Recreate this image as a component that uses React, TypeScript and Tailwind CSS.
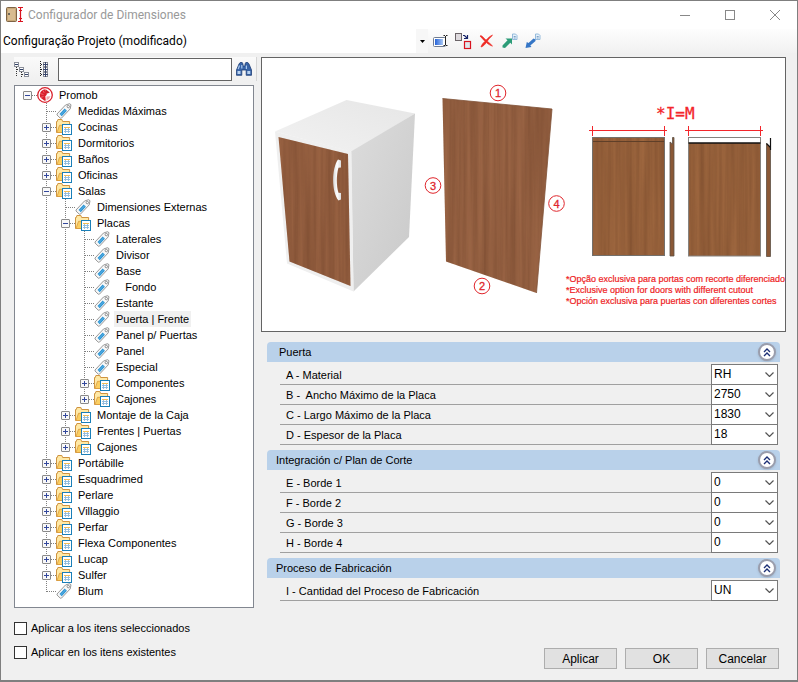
import { useState } from 'react'
import type { ReactNode } from 'react'

type TreeItem = {
  label: string
  kind?: 'root' | 'folder' | 'tag'
  open?: boolean
  children?: TreeItem[]
}

type Field = { id: string; label: string; value: string }

const folder = (label: string, children: TreeItem[] = [], open = false): TreeItem => ({
  label, kind: 'folder', open, children,
})
const tag = (label: string): TreeItem => ({ label, kind: 'tag' })

const TREE: TreeItem = {
  label: 'Promob',
  kind: 'root',
  open: true,
  children: [
    tag('Medidas Máximas'),
    folder('Cocinas'),
    folder('Dormitorios'),
    folder('Baños'),
    folder('Oficinas'),
    folder('Salas', [
      tag('Dimensiones Externas'),
      folder('Placas', [
        tag('Laterales'),
        tag('Divisor'),
        tag('Base'),
        tag('   Fondo'),
        tag('Estante'),
        tag('Puerta | Frente'),
        tag('Panel p/ Puertas'),
        tag('Panel'),
        tag('Especial'),
        folder('Componentes'),
        folder('Cajones'),
      ], true),
      folder('Montaje de la Caja'),
      folder('Frentes | Puertas'),
      folder('Cajones'),
    ], true),
    folder('Portábille'),
    folder('Esquadrimed'),
    folder('Perlare'),
    folder('Villaggio'),
    folder('Perfar'),
    folder('Flexa Componentes'),
    folder('Lucap'),
    folder('Sulfer'),
    tag('Blum'),
  ],
}

const SECTIONS: { title: string; inset?: boolean; fields: Field[] }[] = [
  {
    title: 'Puerta',
    inset: true,
    fields: [
      { id: 'a', label: 'A - Material', value: 'RH' },
      { id: 'b', label: 'B -  Ancho Máximo de la Placa', value: '2750' },
      { id: 'c', label: 'C - Largo Máximo de la Placa', value: '1830' },
      { id: 'd', label: 'D - Espesor de la Placa', value: '18' },
    ],
  },
  {
    title: 'Integración c/ Plan de Corte',
    fields: [
      { id: 'e', label: 'E - Borde 1', value: '0' },
      { id: 'f', label: 'F - Borde 2', value: '0' },
      { id: 'g', label: 'G - Borde 3', value: '0' },
      { id: 'h', label: 'H - Borde 4', value: '0' },
    ],
  },
  {
    title: 'Proceso de Fabricación',
    fields: [{ id: 'i', label: 'I - Cantidad del Proceso de Fabricación', value: 'UN' }],
  },
]

/* ---------- icons ---------- */

function AppIcon() {
  return (
    <svg width="18" height="18" viewBox="0 0 18 18" aria-hidden="true">
      <rect x="0.5" y="1.5" width="10" height="14" rx="1" fill="#c9a878" stroke="#7d6344" />
      <rect x="2" y="3" width="7" height="11" fill="#d8bc90" />
      <rect x="2" y="7" width="2" height="2" fill="#6e6657" />
      <path d="M12 1.5h5M12 15.5h5M14.5 2v13M13 4.5h3M13 12.5h3" stroke="#d8131f" strokeWidth="1.2" />
    </svg>
  )
}

function RootIcon() {
  return (
    <svg width="16" height="16" viewBox="0 0 16 16" aria-hidden="true">
      <circle cx="8" cy="8" r="7.3" fill="#fff" stroke="#d9202c" strokeWidth="1.3" />
      <path d="M8.500 2.200a5.800 5.800 0 0 0-5 8.500l4 3 1.300-.3-.5-4.200 1.500-1.400-.6-2.300z" fill="#dc1f2b" />
      <path d="M9 2.400l3.800 3-1.800.8-2 .6z" fill="#c9222c" />
      <path d="M9.500 9.500l4-.3-1.500 2.600-2.500 1.600z" fill="#f0a5a9" />
      <path d="M3 6.500l3.500 1M6 3.500l1.200 2.400M3.500 10.500l3-1" stroke="#fff" strokeOpacity="0.5" strokeWidth="0.6" />
    </svg>
  )
}

function FolderIcon() {
  return (
    <svg width="16" height="16" viewBox="0 0 16 16" aria-hidden="true">
      <path d="M.5 13.5v-11h.8l.6-2h4l.7 2h7v11z" fill="#ffe9a6" stroke="#cf9440" />
      <path d="M1 13.500l2.500-7.200h10v7.200z" fill="#fbcf62" stroke="#d99a3e" strokeWidth="0.8" />
      <rect x="6.500" y="5.500" width="9" height="10" fill="#fff" stroke="#1a7fb8" />
      <path d="M8 8.500h6" stroke="#f3bd54" />
      <path d="M8 10.500h6M8 12.500h6M9.500 9v5M12.500 9v5" stroke="#8cb9dc" strokeWidth="0.9" />
    </svg>
  )
}

function TagIcon() {
  return (
    <svg width="16" height="16" viewBox="0 0 16 16" aria-hidden="true">
      <path d="M1 11L9.500 2l4-1.300 1.500 1-.8 4.200-8.700 9.200-1.200.1L1 12z" fill="#f8f8f8" stroke="#8c8c8c" strokeWidth="0.9" />
      <path d="M3.500 11L8.700 5.500l2.200 2.300L5.700 13.300z" fill="#2a94d4" />
      <path d="M4.600 12l5.200-5.400" stroke="#8fcbee" strokeWidth="0.6" />
      <circle cx="12.300" cy="3.600" r="1.200" fill="#fff" stroke="#777" strokeWidth="0.8" />
    </svg>
  )
}

const ICONS: Record<string, () => ReactNode> = { root: RootIcon, folder: FolderIcon, tag: TagIcon }

function CollapseAllIcon() {
  return (
    <svg width="16" height="16" viewBox="0 0 16 16" aria-hidden="true">
      <path d="M2.5 6v10M7.5 11v5M3 8.5h3M8 13.5h3" stroke="#333" strokeDasharray="1 1" />
      <g fill="#fff" stroke="#8b8f99">
        <rect x="0.5" y="1.5" width="4" height="4" />
        <rect x="5.5" y="6.5" width="4" height="4" />
        <rect x="10.5" y="11.5" width="4" height="4" />
      </g>
      <path d="M1 3.5h3M6 8.5h3M11 13.5h3" stroke="#2f3f66" />
    </svg>
  )
}

function ExpandAllIcon() {
  return (
    <svg width="12" height="16" viewBox="0 0 12 16" aria-hidden="true">
      <path d="M1.5 0v16M2 3.5h2M2 8.5h2M2 13.5h2" stroke="#222" strokeDasharray="1 1" />
      <g fill="#fff" stroke="#8b8f99">
        <rect x="4.5" y="1.5" width="4" height="4" />
        <rect x="4.5" y="6.5" width="4" height="4" />
        <rect x="4.5" y="11.5" width="4" height="4" />
      </g>
      <path d="M4 3.5h5M4 8.5h5M4 13.5h5M6.5 1v15" stroke="#39466b" />
    </svg>
  )
}

function BinocularsIcon() {
  return (
    <svg width="16" height="14" viewBox="0 0 16 14" aria-hidden="true">
      <path d="M3 2l1.2-1.5h2L7 2v2h2V2l.8-1.5h2L13 2l2.5 6v5.3h-5.3V8H5.8v5.3H.5V8z" fill="#3763a6" stroke="#1f3f77" strokeWidth="0.8" />
      <path d="M1.5 9h3v3h-3zM11.3 9h3v3h-3z" fill="#b9d2f0" />
      <path d="M3.5 3.5l-1.3 3.6M10.4 3.5v3.6M5.8 3v3.5" stroke="#a9c8ee" strokeWidth="1.2" />
    </svg>
  )
}

function RenameIcon() {
  return (
    <svg width="16" height="14" viewBox="0 0 16 14" aria-hidden="true">
      <defs>
        <linearGradient id="rename" x1="0" x2="1">
          <stop offset="0" stopColor="#2563d8" />
          <stop offset="1" stopColor="#a9c8f5" />
        </linearGradient>
      </defs>
      <rect x="0.5" y="3.5" width="12" height="9" rx="1" fill="#fff" stroke="#6f7c92" />
      <rect x="2" y="5" width="8" height="6" fill="url(#rename)" />
      <path d="M10.5 1.500h1.500M13 1.500h1.500M10.500 11.500h1.500M13 11.500h1.500M12.500 2v9" stroke="#222" />
    </svg>
  )
}

function DuplicateIcon() {
  return (
    <svg width="17" height="17" viewBox="0 0 17 17" aria-hidden="true">
      <rect x="0.5" y="0.5" width="6" height="7" fill="#dedade" stroke="#6b6468" />
      <path d="M8 2.500h1.500l2.500 2.500M12.500 2v3.500H9" stroke="#17256b" strokeWidth="1.2" fill="none" />
      <rect x="9.5" y="8.5" width="6" height="7" fill="#dfe6ea" stroke="#d8131f" strokeWidth="1.2" />
    </svg>
  )
}

function DeleteIcon() {
  return (
    <svg width="15" height="14" viewBox="0 0 15 14" aria-hidden="true">
      <path d="M1 2c1-.8 2-.3 6 4.200C9 4 11 2 13.500 1.200 11 3.500 9.500 5.300 8.300 7.200c1.700 1.500 3.500 3 5.200 4.800-1.800-.2-4-1.700-6.200-3.500C5.500 11 4 12.500 2 13c.5-2 2-3.800 4-5.700C4 5.500 2.500 3.500 1 2z" fill="#ee2a24" stroke="#ee2a24" strokeWidth="0.700" strokeLinejoin="round" />
    </svg>
  )
}

function PageArrowIcon({ color, out = false }: { color: string; out?: boolean }) {
  return (
    <svg width="16" height="16" viewBox="0 0 16 16" aria-hidden="true">
      <path d="M10.500 1h3l1.500 1.500V6.500h-4.500z" fill="#e8f2fb" stroke="#8bb4d8" strokeWidth="0.9" />
      <path d="M11.700 3.500h2M11.700 5h2" stroke="#4d7fb0" strokeWidth="0.7" />
      {out
        ? <path d="M10.500 6.500L8.500 5.500l-5 4.500-1.700-1L.500 15l6-1-1.200-1.600 5.200-4.500z" fill={color} />
        : <path d="M3.500 5.500h6.500v6L8.300 9.800 3 15 .500 14.500V12.500L5.500 7.200z" fill={color} />}
    </svg>
  )
}

/* ---------- tree ---------- */

function Guide({ kind }: { kind: 'none' | 'line' | 'tee' | 'end' | 'top' }) {
  return (
    <svg width="19" height="16" viewBox="0 0 19 16" className="block shrink-0" aria-hidden="true">
      <g stroke="#808080" strokeDasharray="1 1" fill="none">
        {(kind === 'line' || kind === 'tee') && <path d="M9.500 0v16" />}
        {kind === 'end' && <path d="M9.500 0v9" />}
        {kind !== 'none' && kind !== 'line' && <path d="M10 8.500h9" />}
      </g>
    </svg>
  )
}

function Expander({ open, onClick, label }: { open: boolean; onClick: () => void; label: string }) {
  return (
    <button
      type="button"
      aria-label={`${open ? 'Contraer' : 'Expandir'} ${label}`}
      onClick={onClick}
      className="absolute top-1 left-[5px] block"
    >
      <svg width="9" height="9" viewBox="0 0 9 9" className="block">
        <rect x="0.5" y="0.5" width="8" height="8" rx="0.5" fill="#f8f8f8" stroke="#8a8a8a" />
        <path d="M2 4.500h5" stroke="#33489c" />
        {!open && <path d="M4.500 2v5" stroke="#33489c" />}
      </svg>
    </button>
  )
}

type NodeProps = {
  item: TreeItem
  guides: boolean[]
  last: boolean
  selected: string
  onSelect: (label: string) => void
}

function TreeNode({ item, guides, last, selected, onSelect }: NodeProps) {
  const [open, setOpen] = useState(!!item.open)
  const Icon = ICONS[item.kind ?? 'tag']
  const isRoot = item.kind === 'root'
  const nextGuides = [...guides, !last]

  return (
    <li>
      <div className="flex h-4 items-center">
        {guides.map((g, i) => <Guide key={i} kind={g ? 'line' : 'none'} />)}
        <span className="relative shrink-0">
          <Guide kind={isRoot ? 'top' : last ? 'end' : 'tee'} />
          {item.children && <Expander open={open} onClick={() => setOpen(!open)} label={item.label} />}
        </span>
        <Icon />
        <button
          type="button"
          onClick={() => onSelect(item.label)}
          className={`ml-1 h-4 px-0.5 leading-4 whitespace-pre ${selected === item.label ? 'bg-[#f0f0f0]' : ''}`}
        >
          {item.label}
        </button>
      </div>
      {open && item.children && item.children.length > 0 && (
        <ul>
          {item.children.map((child, i) => (
            <TreeNode
              key={child.label}
              item={child}
              guides={nextGuides}
              last={i === item.children!.length - 1}
              selected={selected}
              onSelect={onSelect}
            />
          ))}
        </ul>
      )}
    </li>
  )
}

/* ---------- door drawing ---------- */

function Callout({ x, y, n }: { x: number; y: number; n: number }) {
  return (
    <g>
      <circle cx={x} cy={y} r="7.800" fill="#fff" stroke="#e0262c" strokeWidth="1" />
      <text x={x} y={y + 4} textAnchor="middle" fontSize="11" fill="#e0262c" stroke="#e0262c" strokeWidth="0.300">{n}</text>
    </g>
  )
}

function Measure({ x1, x2 }: { x1: number; x2: number }) {
  return (
    <path
      d={`M${x1 - 3} 130.500H${x2 + 3}M${x1 + 0.5} 126v10M${x2 + 0.5} 126v10`}
      stroke="#f3262b"
      strokeWidth="1"
    />
  )
}

function DoorDrawing() {
  return (
    <svg viewBox="262 58 523 273" className="block w-full" role="img" aria-label="Puerta | Frente">
      <defs>
        <linearGradient id="top" x1="0" y1="1" x2="1" y2="0">
          <stop offset="0" stopColor="#f2f2f2" />
          <stop offset="1" stopColor="#e6e6e6" />
        </linearGradient>
        <linearGradient id="side" x1="0" y1="0" x2="1" y2="1">
          <stop offset="0" stopColor="#dcdcdc" />
          <stop offset="1" stopColor="#c9c9c9" />
        </linearGradient>
        <linearGradient id="handle" x1="0" x2="1">
          <stop offset="0" stopColor="#d5d5d5" />
          <stop offset="0.5" stopColor="#ffffff" />
          <stop offset="1" stopColor="#dddddd" />
        </linearGradient>
        <filter id="grain" x="0" y="0" width="1" height="1" colorInterpolationFilters="sRGB">
          <feTurbulence type="fractalNoise" baseFrequency="0.18 0.005" numOctaves="3" seed="4" />
          <feColorMatrix values="0 0 0 0 0.32  0 0 0 0 0.17  0 0 0 0 0.09  0.500 0 0 0 -0.100" />
          <feComposite in2="SourceGraphic" operator="in" result="veins" />
          <feMerge>
            <feMergeNode in="SourceGraphic" />
            <feMergeNode in="veins" />
          </feMerge>
        </filter>
      </defs>

      {/* cabinet */}
      <path d="M275 131.500L346.500 100 415 113.500 352 152z" fill="url(#top)" />
      <path d="M351 151.500L415 113.500 409 237 353.500 291.500z" fill="url(#side)" />
      <path d="M275 131.500L351.500 151.500 353.500 291.500 287 263.500z" fill="#efefef" />
      <path d="M278.500 137L348 154 350.500 286 289.500 261.500z" fill="#9a6343" filter="url(#grain)" />
      <path d="M338 159.500l3 1v7l-2.500.3c-2.200 7-2.200 18 0 25l2.500.3v6.500l-2.500 1c-7-9-7-32-.5-41.100z" fill="url(#handle)" />

      {/* door panel */}
      <path d="M442.500 98.500L552 109 536.500 293 446 261.500z" fill="#9c6646" filter="url(#grain)" />
      <path d="M442.500 98.500L552 109 536.500 293" fill="none" stroke="#81543a" strokeWidth="0.800" />

      <g fontFamily="'Liberation Sans', Arial, sans-serif">
        <Callout x={498} y={93} n={1} />
        <Callout x={482} y={286} n={2} />
        <Callout x={433} y={185.500} n={3} />
        <Callout x={556.500} y={203.500} n={4} />
      </g>

      {/* cutout variants */}
      <text x="656" y="119" fontSize="16" fill="#f3262b" stroke="#f3262b" strokeWidth="0.300" fontFamily="'DejaVu Sans Mono', monospace">*I=M</text>
      <Measure x1={592} x2={664} />
      <Measure x1={688} x2={760} />

      <rect x="592.500" y="137.500" width="72" height="118" fill="#9e673f" filter="url(#grain)" />
      <rect x="592.500" y="137.500" width="72" height="118" fill="none" stroke="#73706c" />
      <path d="M593 141.500h71" stroke="#5f3f28" />
      <path d="M670 142l2.500 2v-6.500h1.500v118.500h-4z" fill="#8a5836" stroke="#5e5045" strokeWidth="0.800" />

      <rect x="688.500" y="143" width="72" height="113" fill="#9e673f" filter="url(#grain)" />
      <rect x="688.500" y="137.500" width="72" height="118.500" fill="none" stroke="#85827e" />
      <rect x="689" y="138" width="71" height="4.500" fill="#fff" />
      <path d="M688.500 143h72" stroke="#111" strokeWidth="1.600" />
      <path d="M766.500 143.500l4 4v109h-4z" fill="#8a5836" stroke="#5e5045" strokeWidth="0.800" />
      <path d="M770.500 138v12M766.500 143.500l4 4" stroke="#111" strokeWidth="1.200" />

      <g fontSize="9" fill="#ee1c24" stroke="#ee1c24" strokeWidth="0.200" fontFamily="'Liberation Sans', Arial, sans-serif">
        <text x="566" y="282">*Opção exclusiva para portas com recorte diferenciado</text>
        <text x="566" y="293">*Exclusive option for doors with different cutout</text>
        <text x="566" y="304">*Opción exclusiva para puertas con diferentes cortes</text>
      </g>
    </svg>
  )
}

/* ---------- form ---------- */

function FieldRow({ field }: { field: Field }) {
  return (
    <div className="flex h-5 items-end">
      <label
        htmlFor={field.id}
        className="h-5 flex-1 border-b border-[#a0a0a0] pl-[6px] leading-5 whitespace-pre"
      >
        {field.label}
      </label>
      <span className="relative h-[21px] w-[67px]">
        <select
          id={field.id}
          defaultValue={field.value}
          className="block h-[21px] w-full appearance-none border border-[#7a7a7a] bg-white pb-0.5 pl-[2px] text-xs outline-none"
        >
          <option>{field.value}</option>
        </select>
        <svg width="9" height="5" viewBox="0 0 9 5" className="pointer-events-none absolute top-2 right-1" aria-hidden="true">
          <path d="M0.500 0.500l4 4 4-4" fill="none" stroke="#555" strokeWidth="1.200" />
        </svg>
      </span>
    </div>
  )
}

function Section({ title, inset, fields }: { title: string; inset?: boolean; fields: Field[] }) {
  const [open, setOpen] = useState(true)
  return (
    <section className="mb-[5px]">
      <div className="flex h-5 items-center justify-between rounded-t bg-[#b9d1ea] pr-1">
        <h2 className={inset ? 'pl-3' : 'pl-[9px]'}>{title}</h2>
        <button
          type="button"
          aria-label={`Mostrar u ocultar ${title}`}
          onClick={() => setOpen(!open)}
          className="flex size-[18px] items-center justify-center rounded-full border-2 border-[#9a9dac] bg-white shadow-sm"
        >
          <svg width="8" height="9" viewBox="0 0 8 9" aria-hidden="true">
            <path d="M1 4l3-3 3 3M1 8l3-3 3 3" fill="none" stroke="#1c2f75" strokeWidth="1.400" />
          </svg>
        </button>
      </div>
      {open && (
        <div className="pt-[3px] pr-[2px] pl-[13px]">
          {fields.map((f) => <FieldRow key={f.id} field={f} />)}
        </div>
      )}
    </section>
  )
}

function CheckRow({ id, label }: { id: string; label: string }) {
  return (
    <div className="flex h-6 items-center">
      <input
        id={id}
        type="checkbox"
        className="size-[13px] appearance-none border border-[#333] bg-white checked:bg-[#0078d7]"
      />
      <label htmlFor={id} className="pl-1">{label}</label>
    </div>
  )
}

function ToolButton({ label, children }: { label: string; children: ReactNode }) {
  return (
    <button type="button" aria-label={label} className="flex h-5 w-[23px] items-center justify-center">
      {children}
    </button>
  )
}

export default function App() {
  const [selected, setSelected] = useState('Puerta | Frente')

  return (
    <div className="flex min-h-screen flex-col border border-b-2 border-[#7f7f7f] bg-[#f0f0f0] font-['Liberation_Sans',Arial,sans-serif] text-[11px] text-black">
      {/* title bar */}
      <header className="flex h-7 items-center bg-white pl-[5px] font-['Roboto',sans-serif]">
        <AppIcon />
        <h1 className="flex-1 pl-1 text-xs text-[#999]">Configurador de Dimensiones</h1>
        <div className="flex text-[#888]">
          <button type="button" aria-label="Minimizar" className="flex h-7 w-[45px] items-center justify-center">
            <svg width="10" height="10" viewBox="0 0 10 10"><path d="M0 5.500h10" stroke="currentColor" /></svg>
          </button>
          <button type="button" aria-label="Maximizar" className="flex h-7 w-[45px] items-center justify-center">
            <svg width="10" height="10" viewBox="0 0 10 10"><rect x="0.500" y="0.500" width="9" height="9" fill="none" stroke="currentColor" /></svg>
          </button>
          <button type="button" aria-label="Cerrar" className="flex h-7 w-[45px] items-center justify-center">
            <svg width="10" height="10" viewBox="0 0 10 10"><path d="M0 0l10 10M10 0L0 10" stroke="currentColor" /></svg>
          </button>
        </div>
      </header>

      {/* configuration bar */}
      <div className="flex h-6 items-center bg-gradient-to-b from-[#fdfdfd] to-[#f1f1f1]">
        <div className="relative h-6 w-[427px]">
          <select
            aria-label="Configuração"
            defaultValue="Configuração Projeto (modificado)"
            className="block h-6 w-full appearance-none bg-white pl-[2px] font-['Roboto',sans-serif] text-xs outline-none"
          >
            <option>Configuração Projeto (modificado)</option>
          </select>
          <span className="pointer-events-none absolute inset-y-0 right-0 flex w-3 items-center justify-center bg-[#f7f7f7]">
            <svg width="5" height="3" viewBox="0 0 5 3"><path d="M0 0h5L2.500 3z" fill="#000" /></svg>
          </span>
        </div>
        <div className="flex pl-px">
          <ToolButton label="Renombrar"><RenameIcon /></ToolButton>
          <ToolButton label="Duplicar"><DuplicateIcon /></ToolButton>
          <ToolButton label="Eliminar"><DeleteIcon /></ToolButton>
          <ToolButton label="Importar"><PageArrowIcon color="#2c9c78" /></ToolButton>
          <ToolButton label="Exportar"><PageArrowIcon color="#3576c6" out /></ToolButton>
        </div>
      </div>

      <main className="flex flex-1">
        {/* left column */}
        <div className="w-[240px] shrink-0 pt-1 ml-[13px]">
          <div className="mr-[-3px] mb-1 flex h-6 items-center border-r border-[#d5d5d5] bg-gradient-to-b from-[#fafafa] to-[#f0f0f0]">
            <button type="button" aria-label="Contraer todo" className="flex h-6 w-[17px] items-center">
              <CollapseAllIcon />
            </button>
            <button type="button" aria-label="Expandir todo" className="flex h-6 w-[27px] items-center justify-center">
              <ExpandAllIcon />
            </button>
            <input
              type="text"
              aria-label="Buscar"
              className="h-[23px] min-w-0 flex-1 border border-[#646464] bg-white px-1 outline-none"
            />
            <button type="button" aria-label="Buscar dimensión" className="flex h-6 w-6 items-center justify-center">
              <BinocularsIcon />
            </button>
          </div>
          <ul className="border border-[#828790] bg-white pt-px pb-2 pl-[3px]">
            <TreeNode item={TREE} guides={[]} last selected={selected} onSelect={setSelected} />
          </ul>
          <div className="pt-2">
            <CheckRow id="selected-items" label="Aplicar a los itens seleccionados" />
            <CheckRow id="existing-items" label="Aplicar en los itens existentes" />
          </div>
        </div>

        {/* right column */}
        <div className="flex min-w-0 flex-1 flex-col pt-1 pr-[11px] pl-[7px]">
          <div className="border border-[#646464] bg-white">
            <DoorDrawing />
          </div>
          <div className="pt-[10px] pr-[6px] pl-[6px]">
            {SECTIONS.map((s) => <Section key={s.title} {...s} />)}
          </div>
          <div className="mt-auto flex justify-end gap-2 pr-[7px] pb-[11px] text-xs">
            {['Aplicar', 'OK', 'Cancelar'].map((b) => (
              <button key={b} type="button" className="h-[21px] w-[73px] border border-[#adadad] bg-[#e1e1e1]">
                {b}
              </button>
            ))}
          </div>
        </div>
      </main>
    </div>
  )
}
